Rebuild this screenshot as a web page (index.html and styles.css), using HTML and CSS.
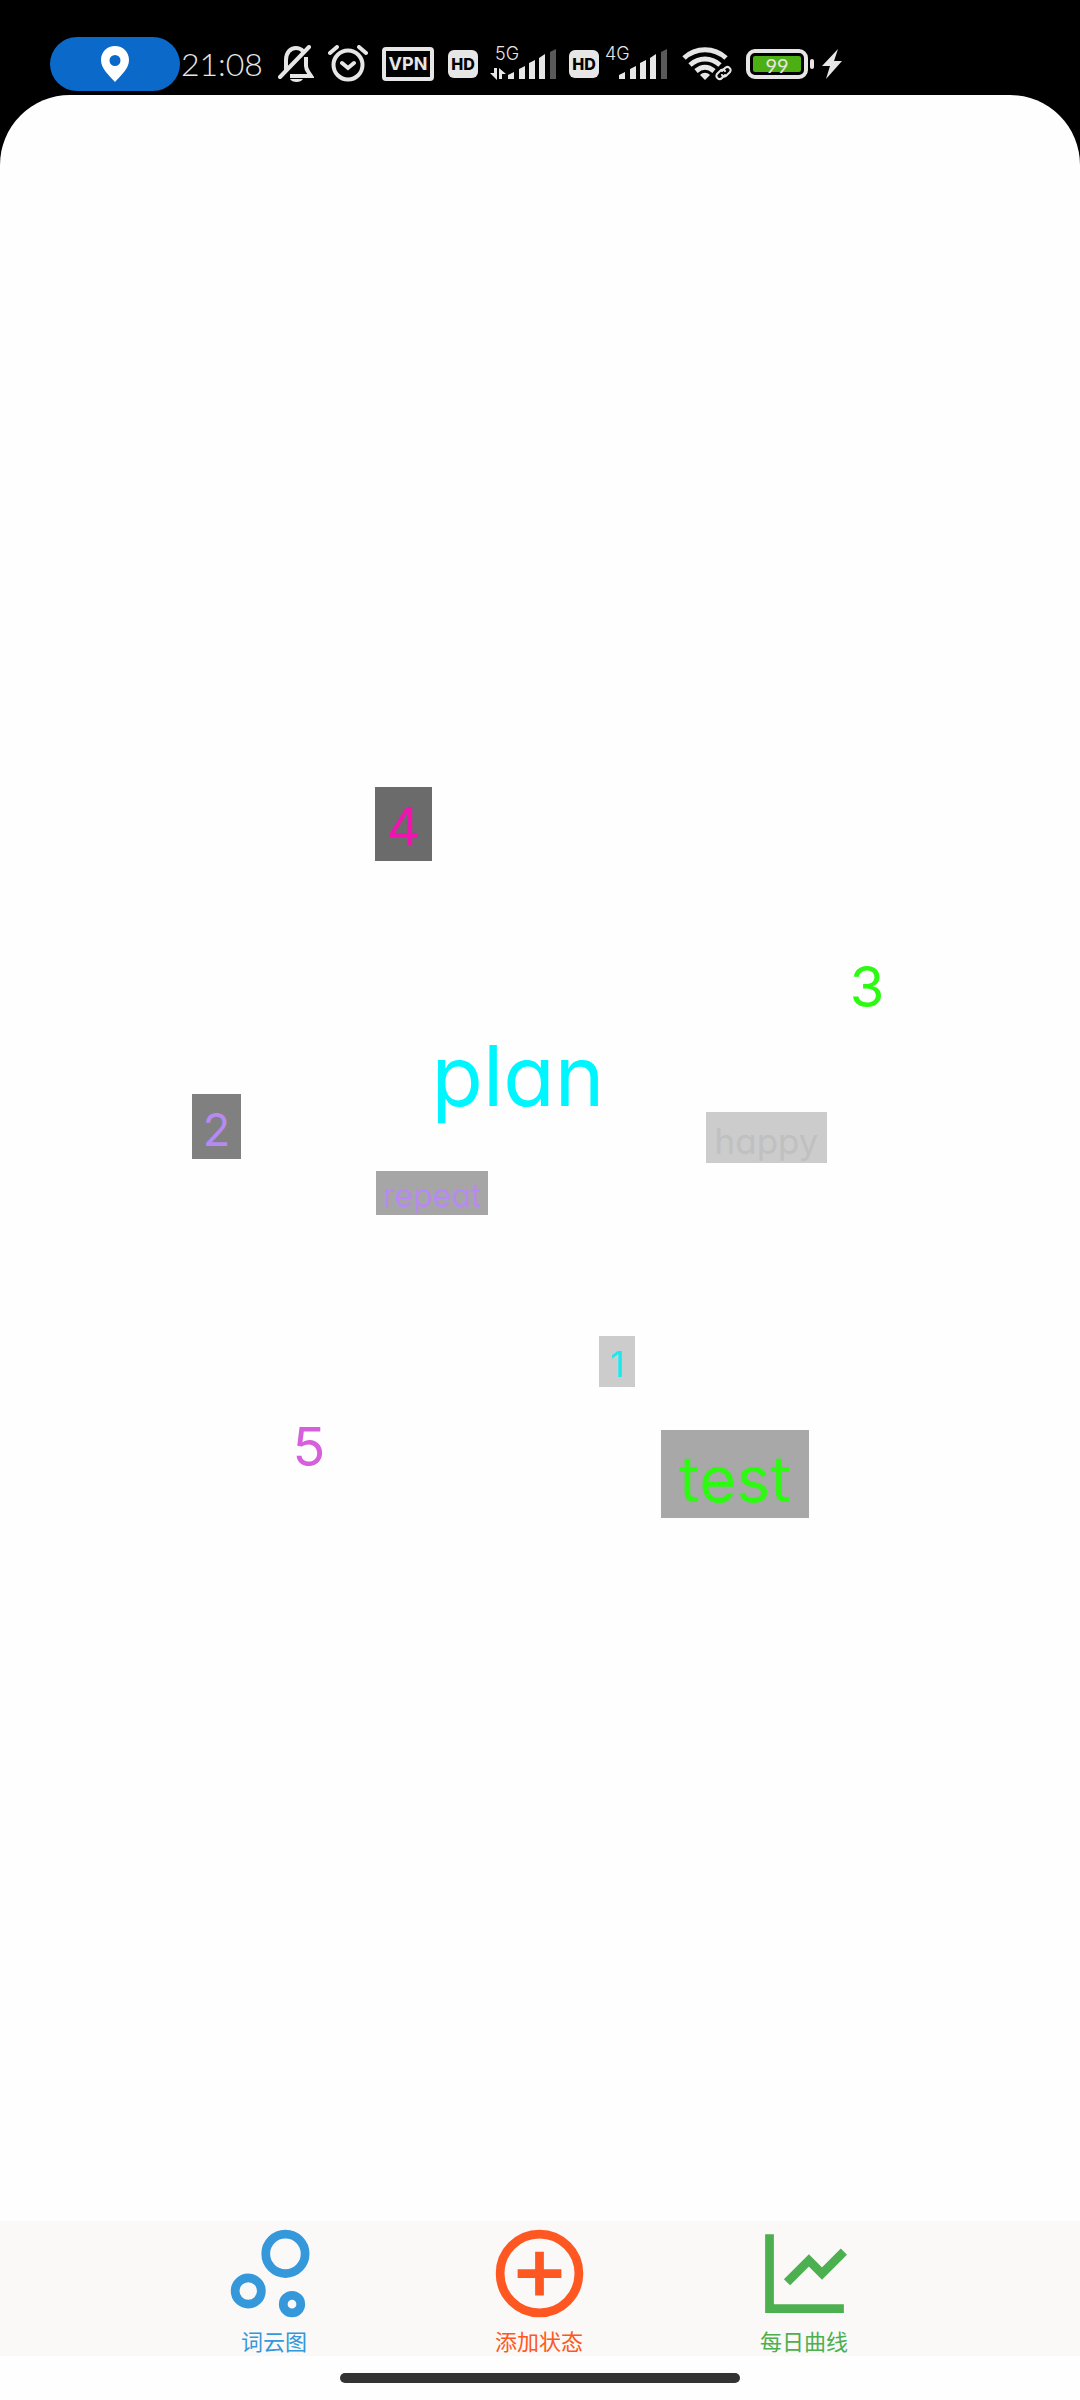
FILE: index.html
```html
<!DOCTYPE html>
<html lang="zh-CN">
<head>
<meta charset="utf-8">
<meta name="viewport" content="width=device-width, initial-scale=1">
<title>词云图</title>
<link rel="stylesheet" href="styles.css">
</head>
<body>
<header class="status">
  <span class="pill">
    <svg width="28" height="36" viewBox="0 0 28 36"><path fill="#fff" fill-rule="evenodd" d="M14 0C6 0 0 6 0 14c0 9 8 15 14 22 6-7 14-13 14-22C28 6 22 0 14 0zm0 9a5.500 5.500 0 1 1 0 11 5.500 5.500 0 0 1 0-11z"/></svg>
  </span>
  <time class="clock">21:08</time>
  <div class="icons">
    <svg width="36" height="38" viewBox="0 0 36 38" fill="none" stroke="#e6e6e6" stroke-width="4">
      <path d="M8 25V15C8 8 12 3 18 3c3 0 5 1 7 3M28 12v9c0 4 2 5 5 10H12" />
      <path d="M2 32L31 2" stroke-linecap="round"/><path d="M12 34h13c-2 4-11 4-13 0z" fill="#e6e6e6" stroke="none"/>
    </svg>
    <svg width="40" height="38" viewBox="0 0 40 38" fill="none" stroke="#e6e6e6" stroke-width="4" stroke-linecap="round">
      <circle cx="20" cy="20" r="14.500"/><path d="M14 18l6 5 6-5M2 8l7-6M38 8l-7-6"/>
    </svg>
    <span class="vpn">VPN</span>
    <span class="hd">HD</span>
    <span class="signal"><small>5G</small>
      <svg width="68" height="32" viewBox="0 0 68 32"><path fill="#e6e6e6" d="M5 20h3v12L1 25h4zM10 31V20l7 6h-4v5zM19 31v-4l6-3v7zM30 31V21l6-3v13zM40 31V15l6-3v19zM50 31V10l6-4v25z"/><path fill="#595959" d="M61 31V4l6-3v30z"/></svg>
    </span>
    <span class="hd">HD</span>
    <span class="signal plain"><small>4G</small>
      <svg width="58" height="32" viewBox="10 0 58 32"><path fill="#e6e6e6" d="M19 31v-4l6-3v7zM30 31V21l6-3v13zM40 31V15l6-3v19zM50 31V10l6-4v25z"/><path fill="#595959" d="M61 31V4l6-3v30z"/></svg>
    </span>
    <svg width="50" height="36" viewBox="0 0 50 36" fill="none" stroke="#e6e6e6" stroke-width="5">
      <path d="M2 12C14 1 32 1 44 12M8 19c9-8 21-8 30 0M14 25c6-5 12-5 18 0"/>
      <path d="M18 29c3-3 7-3 10 0l-5 5z" fill="#e6e6e6" stroke="none"/>
      <g stroke="#000" stroke-width="7"><path d="M41 25l3-3c3-2 6 1 4 4l-4 4M42 27l-5 5"/></g>
      <g stroke-width="2" stroke-linecap="round"><path d="M40 25l3-3c3-3 7 1 5 4l-4 4c-2 1-3 1-4-1M43 29l-3 3c-3 3-7-1-5-4l4-4c2-1 3-1 4 1"/></g>
    </svg>
    <span class="battery"><span class="charge">99</span></span>
    <svg width="20" height="30" viewBox="0 0 20 30"><path fill="#e6e6e6" d="M16 0L0 17h8L4 30l16-18h-8z"/></svg>
  </div>
</header>
<main class="screen">
  <section class="cloud" id="cloud" aria-label="词云图">
    <span class="word w-4">4</span>
    <span class="word w-3">3</span>
    <span class="word w-plan">plan</span>
    <span class="word w-2">2</span>
    <span class="word w-happy">happy</span>
    <span class="word w-repeat">repeat</span>
    <span class="word w-1">1</span>
    <span class="word w-5">5</span>
    <span class="word w-test">test</span>
  </section>
  <nav class="tabs">
    <a class="tab blue" href="#cloud">
      <svg viewBox="0 0 24 24"><circle cx="14.500" cy="7.500" r="4.500"/><circle cx="6" cy="16" r="3"/><circle cx="16" cy="19" r="2"/></svg>词云图</a>
    <a class="tab orange" href="#add">
      <svg viewBox="0 0 24 24"><circle cx="12" cy="12" r="9"/><path d="M12 7v10M7 12h10"/></svg>添加状态</a>
    <a class="tab green" href="#daily">
      <svg viewBox="0 0 24 24"><path d="M4 3v17h17M8 14l5-5 3 3 5-5"/></svg>每日曲线</a>
  </nav>
  <footer class="home"><span class="handle"></span></footer>
</main>
</body>
</html>
```
FILE: styles.css
```css
* { box-sizing: border-box; }
body {
  margin: 0;
  min-height: 100vh;
  display: flex;
  flex-direction: column;
  background: #000;
  font-family: Inter, "Noto Sans CJK SC", sans-serif;
}
svg { display: block; flex: none; }

.status {
  height: 95px;
  padding: 33px 50px 0;
  display: flex;
  align-items: center;
  color: #e6e6e6;
}
.pill {
  width: 130px;
  height: 54px;
  border-radius: 27px;
  background: #0b69ca;
  display: flex;
  align-items: center;
  justify-content: center;
}
.clock {
  width: 98px;
  padding-left: 1px;
  font: 300 32px/40px Lato, sans-serif;
}
.icons { display: flex; align-items: center; gap: 14px; }
.vpn {
  width: 52px;
  height: 34px;
  border: 4px solid #e6e6e6;
  border-radius: 4px;
  font-size: 18px;
  font-weight: 700;
  line-height: 26px;
  text-align: center;
}
.hd {
  width: 30px;
  height: 28px;
  border-radius: 6px;
  background: #e6e6e6;
  color: #000;
  font-size: 16px;
  font-weight: 800;
  line-height: 28px;
  text-align: center;
}
.signal { position: relative; margin-left: -3px; }
.signal + .hd { margin-left: -2px; }
.signal small {
  position: absolute;
  left: 6px;
  top: -4px;
  font-size: 18px;
  font-weight: 300;
  line-height: 20px;
}
.signal.plain small { left: -5px; }
.battery {
  position: relative;
  width: 62px;
  height: 30px;
  padding: 3px;
  border: 4px solid #e6e6e6;
  border-radius: 9px;
}
.battery::after {
  content: "";
  position: absolute;
  right: -10px;
  top: 6px;
  width: 4px;
  height: 10px;
  border-radius: 2px;
  background: #e6e6e6;
}
.charge {
  display: block;
  height: 16px;
  border-radius: 2px;
  background: #4caf14;
  font: 400 20px/18px Lato, sans-serif;
  text-align: center;
}

.screen {
  flex: 1;
  display: flex;
  flex-direction: column;
  background: #fefefe;
  border-radius: 70px 70px 0 0;
}
.cloud { flex: 1; position: relative; }
.word {
  position: absolute;
  display: flex;
  justify-content: center;
  font-feature-settings: "cv11";
}
.w-4 { left: 375px; top: 692px; width: 57px; height: 74px; font-size: 52px; line-height: 80px; background: #6b6b6b; color: #f013b0; }
.w-3 { left: 847px; top: 862px; width: 40px; font-size: 56px; line-height: 60px; color: #2cfa10; }
.w-plan { left: 433px; top: 931px; width: 170px; font-size: 84px; line-height: 100px; color: #00f6ff; }
.w-2 { left: 192px; top: 999px; width: 49px; height: 65px; font-size: 45px; line-height: 72px; background: #808080; color: #b68af2; }
.w-happy { left: 706px; top: 1017px; width: 121px; height: 51px; font-size: 35px; line-height: 58px; background: #ccc; color: #c0c0c0; }
.w-repeat { left: 376px; top: 1076px; width: 112px; height: 44px; font-size: 32px; line-height: 50px; background: #a6a6a6; color: #b68af2; }
.w-1 { left: 599px; top: 1241px; width: 36px; height: 51px; font-size: 36px; line-height: 56px; background: #ccc; color: #1ce8f0; }
.w-5 { left: 289px; top: 1322px; width: 40px; font-size: 54px; line-height: 60px; color: #d65fdc; }
.w-test { left: 661px; top: 1335px; width: 148px; height: 88px; font-size: 64px; line-height: 97px; background: #a8a8a8; color: #2cfa10; }

.tabs {
  display: flex;
  justify-content: center;
  gap: 160px;
  padding-right: 2px;
  background: #faf9f7;
}
.tab {
  width: 105px;
  height: 135px;
  display: flex;
  flex-direction: column;
  align-items: center;
  font: 400 22px/28px "Noto Sans CJK SC", sans-serif;
  white-space: nowrap;
  text-decoration: none;
}
.tab svg { width: 105px; height: 105px; fill: none; stroke: currentColor; stroke-width: 2; }
.blue { color: #3498db; }
.orange { color: #ff5722; }
.green { color: #4caf50; }

.home { height: 44px; display: flex; align-items: center; justify-content: center; }
.handle { width: 37%; height: 10px; border-radius: 5px; background: #333; }
```
